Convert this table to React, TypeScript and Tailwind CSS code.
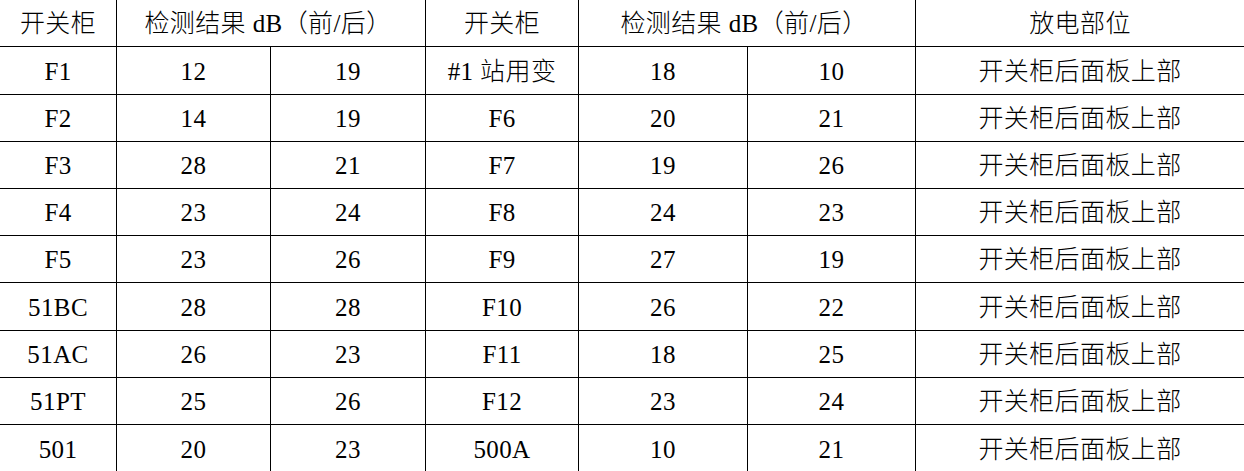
import React from "react";

const rows: [string, string, string, string, string, string, string][] = [
  ["F1", "12", "19", "#1 站用变", "18", "10", "开关柜后面板上部"],
  ["F2", "14", "19", "F6", "20", "21", "开关柜后面板上部"],
  ["F3", "28", "21", "F7", "19", "26", "开关柜后面板上部"],
  ["F4", "23", "24", "F8", "24", "23", "开关柜后面板上部"],
  ["F5", "23", "26", "F9", "27", "19", "开关柜后面板上部"],
  ["51BC", "28", "28", "F10", "26", "22", "开关柜后面板上部"],
  ["51AC", "26", "23", "F11", "18", "25", "开关柜后面板上部"],
  ["51PT", "25", "26", "F12", "23", "24", "开关柜后面板上部"],
  ["501", "20", "23", "500A", "10", "21", "开关柜后面板上部"],
];

const heights = ["h-[48px]", "h-[47px]", "h-[47px]", "h-[47px]", "h-[47px]", "h-[48px]", "h-[47px]", "h-[47px]", "h-[47px]"];

export default function App() {
  return (
    <div
      className="w-[1244px] h-[471px] overflow-hidden bg-white text-black text-[25px] leading-none font-light tracking-[0.4px]"
      style={{ fontFamily: '"Liberation Serif", "Noto Sans CJK SC", serif' }}
    >
      <div className="grid grid-cols-[117px_154px_155px_153px_169px_168px_328px]">
        <div className="h-[47px] flex items-center justify-center border-r border-b border-black">开关柜</div>
        <div className="col-span-2 h-[47px] flex items-center justify-center border-r border-b border-black pr-[6px]">
          检测结果 dB（前/后）
        </div>
        <div className="h-[47px] flex items-center justify-center border-r border-b border-black">开关柜</div>
        <div className="col-span-2 h-[47px] flex items-center justify-center border-r border-b border-black pr-[6px]">
          检测结果 dB（前/后）
        </div>
        <div className="h-[47px] flex items-center justify-center border-b border-black">放电部位</div>
        {rows.map((r, i) => (
          <React.Fragment key={i}>
            {r.map((c, j) => (
              <div
                key={j}
                className={`${heights[i]} flex items-center justify-center border-black ${j < 6 ? "border-r" : ""} ${i < 8 ? "border-b" : ""} pt-[1px]`}
              >
                {c}
              </div>
            ))}
          </React.Fragment>
        ))}
      </div>
    </div>
  );
}
